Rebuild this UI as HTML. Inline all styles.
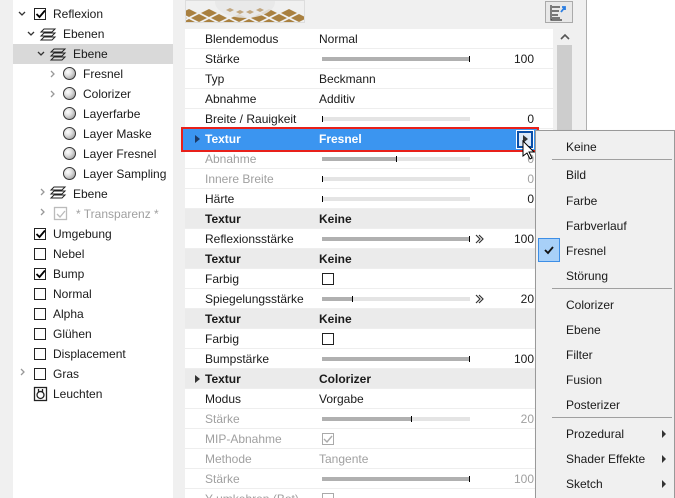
<!DOCTYPE html><html style="width:675px;height:498px;overflow:hidden"><head><meta charset="utf-8"><style>
*{margin:0;padding:0;box-sizing:border-box}
body{width:675px;height:498px;overflow:hidden;background:#f0f0f0;font-family:"Liberation Sans",sans-serif;font-size:12px;color:#1a1a1a;position:relative}
.a{position:absolute;white-space:nowrap}
.t{line-height:20px;height:20px}
.cb{position:absolute;width:12px;height:12px;border:1px solid #222;background:#fff}
.sl{position:absolute;height:4px;background:#e4e4e4;width:148px;left:322px}
.sl i{position:absolute;left:0;top:0;height:4px;background:#b0b0b0}
.sl b{position:absolute;top:-1px;width:1px;height:6px;background:#000}
.g{color:#a0a0a0}
.sp{position:absolute;width:13px;height:13px;border-radius:50%;border:1px solid #333;background:radial-gradient(circle at 35% 35%,#fff 0,#ddd 40%,#888 100%)}
.mi{position:absolute;left:566px;font-size:12px}
.sep{position:absolute;left:552px;width:120px;height:1px;background:#a0a0a0}
</style></head><body>
<div class="a" style="left:13px;top:0;width:160px;height:498px;background:#fff"></div>
<div class="a" style="left:13px;top:44px;width:160px;height:20px;background:#d9d9d9"></div>
<svg class="a" style="left:0;top:0" width="180" height="420" fill="none" stroke="#555" stroke-width="1.3">
<path d="M19 12l3 3 3-3M28 32l3 3 3-3M38 52l3 3 3-3" stroke="#333"/>
<path d="M51 71l3 3-3 3M51 91l3 3-3 3M41 189l3 3-3 3M41 209l3 3-3 3M21 369l3 3-3 3" stroke="#999"/>
<g stroke="#222" stroke-width="1"><path d="M44 29h11l-3 3H41zM44 33h11l-3 3H41zM44 37h11l-3 3H41z"/>
<path d="M54 49h11l-3 3H51zM54 53h11l-3 3H51zM54 57h11l-3 3H51z"/>
<path d="M54 187h11l-3 3H51zM54 191h11l-3 3H51zM54 195h11l-3 3H51z"/></g>
<path d="M36.5 14l3 3 5.5-6.5M36.5 234l3 3 5.5-6.5M36.5 274l3 3 5.5-6.5" stroke="#000" stroke-width="1.8"/>
<rect x="54.5" y="207.5" width="12" height="12" stroke="#bbb"/><path d="M57 214l3 3 5-6" stroke="#bbb"/>
<rect x="34.5" y="387.5" width="12" height="13" stroke="#222"/><circle cx="40.5" cy="395" r="3.5" stroke="#222"/><path d="M38.5 389v2.5h4V389" stroke="#222"/>
</svg>
<div class="cb" style="left:34px;top:8px;background:none"></div>
<div class="a t" style="left:53px;top:4px">Reflexion</div>
<div class="a t" style="left:63px;top:24px">Ebenen</div>
<div class="a t" style="left:73px;top:44px">Ebene</div>
<div class="sp" style="left:63px;top:67px"></div><div class="a t" style="left:83px;top:64px">Fresnel</div>
<div class="sp" style="left:63px;top:87px"></div><div class="a t" style="left:83px;top:84px">Colorizer</div>
<div class="sp" style="left:63px;top:107px"></div><div class="a t" style="left:83px;top:104px">Layerfarbe</div>
<div class="sp" style="left:63px;top:127px"></div><div class="a t" style="left:83px;top:124px">Layer Maske</div>
<div class="sp" style="left:63px;top:147px"></div><div class="a t" style="left:83px;top:144px">Layer Fresnel</div>
<div class="sp" style="left:63px;top:167px"></div><div class="a t" style="left:83px;top:164px">Layer Sampling</div>
<div class="a t" style="left:73px;top:184px">Ebene</div>
<div class="a t g" style="left:76px;top:204px">* Transparenz *</div>
<div class="cb" style="left:34px;top:228px;background:none"></div><div class="a t" style="left:53px;top:224px">Umgebung</div>
<div class="cb" style="left:34px;top:248px"></div><div class="a t" style="left:53px;top:244px">Nebel</div>
<div class="cb" style="left:34px;top:268px;background:none"></div><div class="a t" style="left:53px;top:264px">Bump</div>
<div class="cb" style="left:34px;top:288px"></div><div class="a t" style="left:53px;top:284px">Normal</div>
<div class="cb" style="left:34px;top:308px"></div><div class="a t" style="left:53px;top:304px">Alpha</div>
<div class="cb" style="left:34px;top:328px"></div><div class="a t" style="left:53px;top:324px">Glühen</div>
<div class="cb" style="left:34px;top:348px"></div><div class="a t" style="left:53px;top:344px">Displacement</div>
<div class="cb" style="left:34px;top:368px"></div><div class="a t" style="left:53px;top:364px">Gras</div>
<div class="a t" style="left:53px;top:384px">Leuchten</div>

<svg class="a" style="left:185px;top:0" width="120" height="23">
<rect width="120" height="23" fill="#f0f0f0"/>
<g fill="#a98040">
<path d="M-6 14l8 4-8 4-8-4zM14 14l8 4-8 4-8-4zM34 14l8 4-8 4-8-4zM54 14l8 4-8 4-8-4zM74 14l8 4-8 4-8-4zM94 14l8 4-8 4-8-4zM114 14l8 4-8 4-8-4z"/>
<path d="M4 9l8 4-8 4-8-4zM24 9l8 4-8 4-8-4zM84 9l8 4-8 4-8-4zM104 9l8 4-8 4-8-4z"/>
<path d="M4 19l8 4-8 4-8-4zM24 19l8 4-8 4-8-4zM44 19l8 4-8 4-8-4zM64 19l8 4-8 4-8-4zM84 19l8 4-8 4-8-4zM104 19l8 4-8 4-8-4z"/>
</g>
<ellipse cx="60" cy="2" rx="30" ry="16" fill="#e8e8e8" opacity=".85"/>
<g fill="#b08a50" opacity=".7"><path d="M45 8l4 2-4 2-4-2zM55 10l4 2-4 2-4-2zM65 10l4 2-4 2-4-2zM75 8l4 2-4 2-4-2z"/></g>
<rect x=".5" y=".5" width="119" height="22" fill="none" stroke="#ddd"/>
</svg>
<div class="a" style="left:545px;top:1px;width:28px;height:22px;border:1px solid #aaa;background:#e8e8e8"></div>
<svg class="a" style="left:549px;top:3px" width="22" height="18" fill="none" stroke="#333" stroke-width="1.2"><path d="M3 4h8M3 8h7M3 12h6M3 15h8M2 2v15h11"/><path d="M12 9l4-5m-3 0h3v3" stroke="#2a7de1" stroke-width="1.8"/></svg>
<div class="a" style="left:586px;top:0;width:1px;height:130px;background:#b0b0b0"></div>
<div class="a" style="left:587px;top:0;width:88px;height:130px;background:#fff"></div>
<div class="a" style="left:557px;top:45px;width:15px;height:453px;background:#cdcdcd"></div>
<svg class="a" style="left:559px;top:33px" width="12" height="8" fill="none" stroke="#555" stroke-width="1.6"><path d="M2 6l4-4 4 4"/></svg>
<div class="a" style="left:185px;top:29px;width:368px;height:469px;background:#fff"></div>
<div id="rows" class="a" style="left:0;top:0;width:675px;height:498px;overflow:hidden"></div>
<script>
var R=[["Blendemodus","Normal"],["Stärke","s",100,"100"],["Typ","Beckmann"],["Abnahme","Additiv"],["Breite / Rauigkeit","s",0,"0"],["Textur","Fresnel","sel"],["Abnahme","s",50,"0","g"],["Innere Breite","s",0,"0","g"],["Härte","s",0,"0"],["Textur","Keine","b"],["Reflexionsstärke","s",100,"100","",1],["Textur","Keine","b"],["Farbig","c"],["Spiegelungsstärke","s",20,"20","",1],["Textur","Keine","b"],["Farbig","c"],["Bumpstärke","s",100,"100"],["Textur","Colorizer","b",0,0,0,1],["Modus","Vorgabe"],["Stärke","s",60,"20","g"],["MIP-Abnahme","cc","","","g"],["Methode","Tangente","g"],["Stärke","s",100,"100","g"],["Y umkehren (Bot)","c","","","g"]];
var h="";R.forEach(function(r,i){var y=29+20*i,g=(r[4]=="g"||r[2]=="g")?" g":"";
var bg=r[2]=="b"?"#ebebeb":"#fff";
h+='<div class="a" style="left:185px;top:'+y+'px;width:368px;height:20px;background:'+bg+';border-bottom:1px solid #eee"></div>';
var fw=r[2]=="b"?"font-weight:bold;":"";
h+='<div class="a t'+g+'" style="left:205px;top:'+y+'px;'+fw+'">'+r[0]+'</div>';
if(r[1]=="s"){var w=Math.round(148*r[2]/100);h+='<div class="sl" style="top:'+(y+8)+'px"><i style="width:'+w+'px"></i><b style="left:'+Math.min(w,147)+'px"></b></div>';
h+='<div class="a t'+g+'" style="right:141px;top:'+y+'px">'+r[3]+'</div>';
if(r[5])h+='<svg class="a" style="left:474px;top:'+(y+5)+'px" width="10" height="10" fill="none" stroke="#333" stroke-width="1.2"><path d="M2 1l4 4-4 4M5 1l4 4-4 4"/></svg>';}
else if(r[1]=="c"||r[1]=="cc"){var c=g?"#aaa":"#222";h+='<div class="cb" style="left:322px;top:'+(y+4)+'px;border-color:'+c+'"></div>';if(r[1]=="cc")h+='<svg class="a" style="left:322px;top:'+(y+4)+'px" width="12" height="12" fill="none" stroke="#aaa" stroke-width="1.4"><path d="M2 6l3 3 5-6"/></svg>';}
else if(r[2]!="sel")h+='<div class="a t'+g+'" style="left:319px;top:'+y+'px;'+fw+'">'+r[1]+'</div>';
if(r[6])h+='<div class="a" style="left:195px;top:'+(y+6)+'px;border-left:5px solid #333;border-top:4px solid transparent;border-bottom:4px solid transparent"></div>';
});
document.getElementById("rows").innerHTML=h;
</script>
<div class="a" style="left:181px;top:127px;width:358px;height:25px;border:2px solid #e8201a"></div>
<div class="a" style="left:183px;top:129px;width:354px;height:21px;background:#3b95f0"></div>
<div class="a" style="left:195px;top:135px;border-left:5px solid #1d3a66;border-top:4px solid transparent;border-bottom:4px solid transparent"></div>
<div class="a t" style="left:205px;top:129px;color:#fff;font-weight:bold">Textur</div>
<div class="a t" style="left:319px;top:129px;color:#fff;font-weight:bold">Fresnel</div>
<div class="a" style="left:517px;top:131px;width:16px;height:17px;border:2px solid #0a4fa8;background:#dde9f7;outline:1px solid #fff"></div>
<div class="a" style="left:523px;top:135px;border-left:5px solid #333;border-top:4px solid transparent;border-bottom:4px solid transparent"></div>
<svg class="a" style="left:522px;top:140px" width="14" height="22"><path d="M1 1v15l4-3 3 6 2-1-3-6h5z" fill="#fff" stroke="#000"/></svg>
<div class="a" style="left:535px;top:130px;width:140px;height:370px;background:#f0f0f0;border:1px solid #999;box-shadow:2px 2px 3px rgba(0,0,0,.2)"></div>
<div class="mi" style="top:140px">Keine</div>
<div class="sep" style="top:159px"></div>
<div class="mi" style="top:168px">Bild</div>
<div class="mi" style="top:194px">Farbe</div>
<div class="mi" style="top:219px">Farbverlauf</div>
<div class="a" style="left:538px;top:238px;width:22px;height:24px;background:#a8d0f8;border:1px solid #3d8ee6"></div>
<svg class="a" style="left:543px;top:244px" width="12" height="12" fill="none" stroke="#111" stroke-width="1.8"><path d="M2 6l3 3 5-6"/></svg>
<div class="mi" style="top:244px">Fresnel</div>
<div class="mi" style="top:269px">Störung</div>
<div class="sep" style="top:288px"></div>
<div class="mi" style="top:298px">Colorizer</div>
<div class="mi" style="top:323px">Ebene</div>
<div class="mi" style="top:348px">Filter</div>
<div class="mi" style="top:373px">Fusion</div>
<div class="mi" style="top:398px">Posterizer</div>
<div class="sep" style="top:417px"></div>
<div class="mi" style="top:427px">Prozedural</div>
<div class="mi" style="top:452px">Shader Effekte</div>
<div class="mi" style="top:477px">Sketch</div>
<div class="a" style="left:662px;top:430px;border-left:4px solid #333;border-top:4px solid transparent;border-bottom:4px solid transparent"></div>
<div class="a" style="left:662px;top:455px;border-left:4px solid #333;border-top:4px solid transparent;border-bottom:4px solid transparent"></div>
<div class="a" style="left:662px;top:480px;border-left:4px solid #333;border-top:4px solid transparent;border-bottom:4px solid transparent"></div>
</body></html>
